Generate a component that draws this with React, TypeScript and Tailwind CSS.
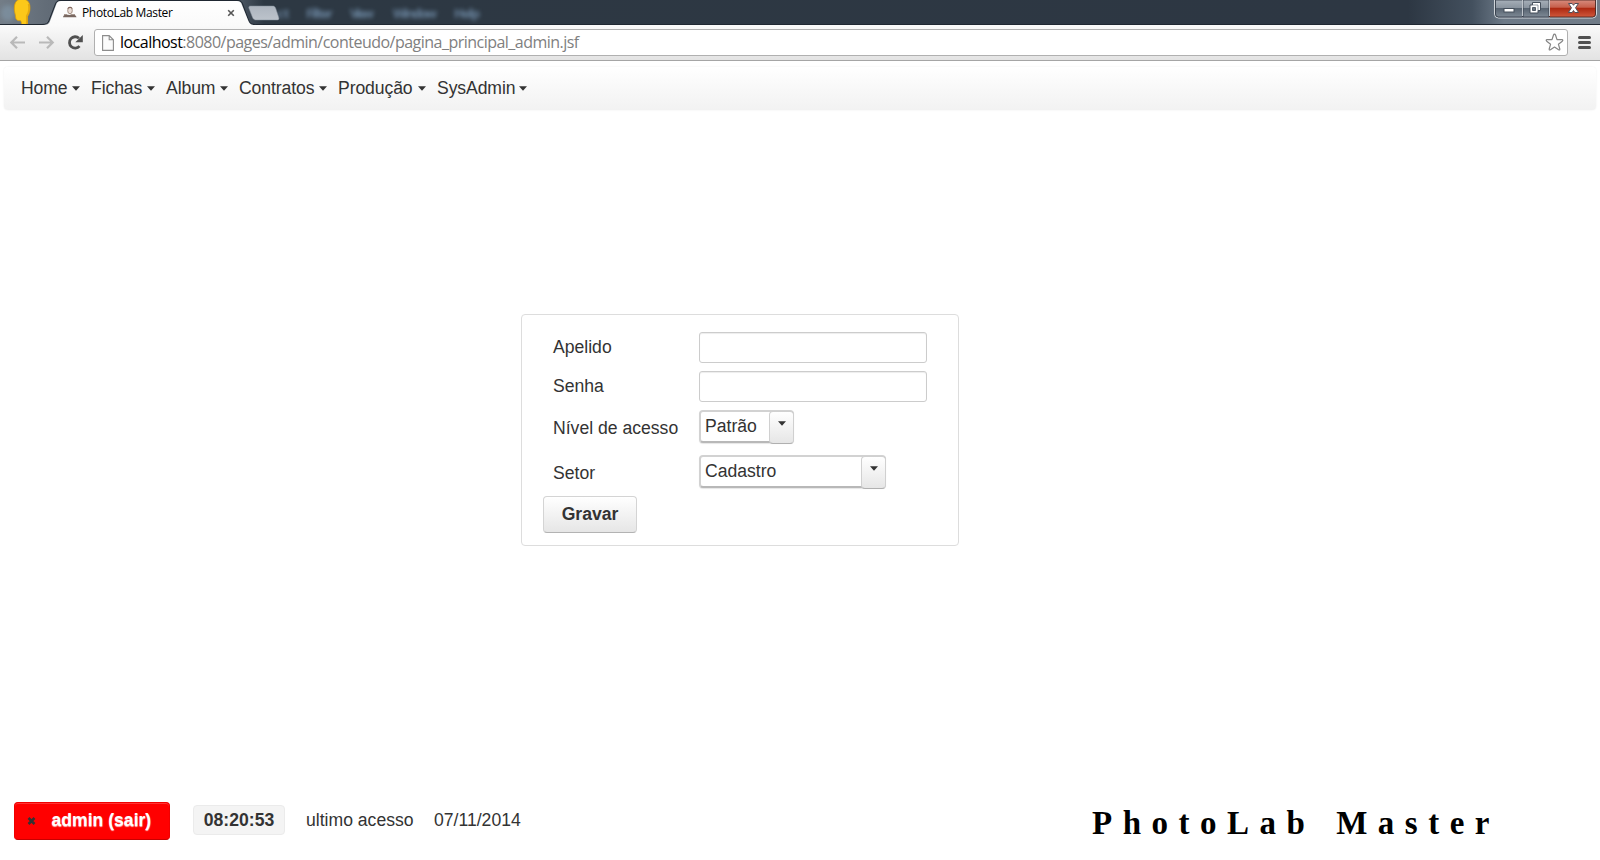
import React from "react";

const sans = "font-['Liberation_Sans',Arial,sans-serif]";

function Caret({ className = "" }: { className?: string }) {
  return (
    <svg className={className} width="8" height="5" viewBox="0 0 8 5">
      <path d="M0 0.300h8L4 4.700z" fill="#333" />
    </svg>
  );
}

function TitleBar() {
  return (
    <div className="relative flex h-[25px] shrink-0 overflow-hidden bg-[#2d3743]">
      <svg width="1600" height="25" viewBox="0 0 1600 25">
        <defs>
          <linearGradient id="frame" x1="0" x2="1">
            <stop offset="0" stopColor="#737d87" />
            <stop offset="0.03" stopColor="#626c77" />
            <stop offset="0.15" stopColor="#4b5662" />
            <stop offset="0.165" stopColor="#2d3843" />
            <stop offset="0.88" stopColor="#2d3743" />
            <stop offset="0.92" stopColor="#43505e" />
            <stop offset="0.94" stopColor="#6c7987" />
            <stop offset="1" stopColor="#717c88" />
          </linearGradient>
          <linearGradient id="tab" x2="0" y2="1">
            <stop offset="0" stopColor="#fff" />
            <stop offset="1" stopColor="#fafafa" />
          </linearGradient>
          <linearGradient id="btn" x2="0" y2="1">
            <stop offset="0" stopColor="#a7b0b9" />
            <stop offset="0.45" stopColor="#8a949f" />
            <stop offset="0.5" stopColor="#586471" />
            <stop offset="1" stopColor="#7e8995" />
          </linearGradient>
          <linearGradient id="close" x2="0" y2="1">
            <stop offset="0" stopColor="#d78c7e" />
            <stop offset="0.42" stopColor="#c7604c" />
            <stop offset="0.5" stopColor="#ae2a12" />
            <stop offset="1" stopColor="#d0583c" />
          </linearGradient>
          <linearGradient id="newtab" x2="0" y2="1">
            <stop offset="0" stopColor="#adb5bf" />
            <stop offset="1" stopColor="#bcc3cb" />
          </linearGradient>
          <filter id="soft" x="-20%" y="-50%" width="140%" height="200%">
            <feGaussianBlur stdDeviation="2" />
          </filter>
        </defs>
        <rect width="1600" height="25" fill="url(#frame)" />
        <ellipse cx="8" cy="13" rx="7" ry="8" fill="#8ba7bd" opacity="0.4" filter="url(#soft)" />
        <g filter="url(#soft)" fill="#7b9ab8" opacity="0.75" fontFamily="Open Sans" fontSize="13" fontWeight="700">
          <text x="277" y="18">ct</text>
          <text x="306" y="18" textLength="27">Filter</text>
          <text x="350" y="18" textLength="24">View</text>
          <text x="393" y="18" textLength="44">Window</text>
          <text x="454" y="18" textLength="26">Help</text>
        </g>
        <path d="M14.300 8C14.500 2 17-1 22-1c6 0 8 4 8 9 0 3.500-1 6.500-2.500 8.500V25H21.500c0-2-.2-3.500-1-4.300-3 .3-4.700-.7-4.900-3.700-.1-3-1.500-5-1.300-9z" fill="#fcc819" stroke="#d69b0d" strokeWidth="0.800" />
        <path d="M28.500 4c1 4 .5 8.500-1.800 12v9" stroke="#e4a911" strokeWidth="1.500" fill="none" />
        <path d="M0 24.500h42c4 0 6-1 7-4L55 5c1.200-3 2-4.500 5-4.500h178c3 0 4 1.500 5 4.500l5.500 15c1.500 3.500 3 4.500 7 4.500H1600" fill="none" stroke="#202832" />
        <path d="M43 25c4 0 6-1 7-4L56 5c1-3 2-4 5-4h176c3 0 4 1 5 4l6 15c1.500 4 3 5 7 5z" fill="url(#tab)" />
        <path d="M249 8.500c-.6-1.500 0-2.500 1.500-2.500h22c1.500 0 2.600.6 3.200 2.200l3 9c.6 1.900 0 2.800-1.500 2.800h-21c-2 0-3-.8-3.700-2.500z" fill="url(#newtab)" stroke="#7f8995" strokeWidth="0.500" />
        <g>
          <ellipse cx="70" cy="10.500" rx="2.300" ry="3.300" fill="#e9dcd5" stroke="#9a8478" strokeWidth="0.900" />
          <path d="M67.500 9c0-3 5-3 5 0-1-1.200-3-1.500-5 0z" fill="#80655a" />
          <path d="M63 17.300c.500-3 3-3.500 6.500-2.300 3.500-1 6.500-.5 7 2.300z" fill="#786760" />
          <path d="M64 14.500h3M71 14.500h4" stroke="#a8988f" />
        </g>
        <path d="M228.200 10.200l5.600 5.600M233.800 10.200l-5.600 5.600" stroke="#555" strokeWidth="1.600" />
        <path d="M1494.500 0v14q0 4 4 4h94q4 0 4-4V0" fill="none" stroke="#d0d5da" />
        <path d="M1495.500 0h27v17h-24q-3 0-3-3z" fill="url(#btn)" stroke="#303944" strokeWidth="0.800" />
        <path d="M1523 0h26v17h-26z" fill="url(#btn)" stroke="#303944" strokeWidth="0.800" />
        <path d="M1549.500 0h46v14q0 3-3 3h-43z" fill="url(#close)" stroke="#451f1a" strokeWidth="0.800" />
        <path d="M1522.500 0v16M1549.500 0v16" stroke="#c0c6cc" />
        <rect x="1504" y="8.500" width="10" height="3.500" fill="#fff" stroke="#454f5b" />
        <path d="M1532.500 2.500h8v8h-2.500v2.500h-8V5h2.500z" fill="#fff" stroke="#454f5b" />
        <path d="M1532.500 7.500h3v3h-3z" fill="#697580" stroke="#454f5b" strokeWidth="0.900" />
        <path d="M1532.500 5h5.500v5.500" fill="none" stroke="#65717d" strokeWidth="0.700" />
        <path d="M1568.500 3.500h3.700l1.300 1.800 1.300-1.800h3.700l-3 4.300 3.100 4.700h-3.800l-1.300-2-1.300 2h-3.800l3.100-4.700z" fill="#fff" stroke="#514e58" strokeWidth="1" />
      </svg>
      <span className="absolute left-[82px] top-[4px] whitespace-nowrap font-['Open_Sans',sans-serif] text-[12px] leading-[17px] tracking-[-0.35px] text-black">
        PhotoLab Master
      </span>
    </div>
  );
}

function Toolbar() {
  return (
    <div className="flex h-9 shrink-0 items-start border-b border-[#a5a5a5] bg-gradient-to-b from-[#fafafa] to-[#e3e3e3]">
      <svg className="shrink-0" width="94" height="35" viewBox="0 0 94 35">
        <g fill="none" stroke="#b9b9b9" strokeWidth="2.200">
          <path d="M25 17.500H11.500M17 11.800l-5.700 5.700 5.700 5.700" />
          <path d="M39 17.500h13.500M47 11.800l5.700 5.700-5.700 5.700" />
        </g>
        <path d="M79.500 21.200A5.700 5.700 0 1 1 79 13.200" fill="none" stroke="#505050" strokeWidth="2.800" />
        <path d="M82.800 10v7.300h-7.500z" fill="#505050" />
      </svg>
      <div className="mt-1 flex h-[27px] w-[1474px] items-center rounded-[3px] border border-[#b0b0b0] bg-white">
        <svg className="ml-[7px] shrink-0" width="12" height="16" viewBox="0 0 12 16">
          <path d="M.6.600h6.600l4.200 4.200v10.600H.6zM7.200.600v4.200h4.200" fill="#fbfbfb" stroke="#8c8c8c" strokeWidth="1.100" />
        </svg>
        <span className="mb-px ml-[6px] grow whitespace-nowrap font-['Open_Sans',sans-serif] text-[16px] leading-[24px] tracking-[-0.52px] text-[#808080]">
          <span className="text-black">localhost</span>:8080/pages/admin/conteudo/pagina_principal_admin.jsf
        </span>
        <svg className="mr-[3px] shrink-0" width="19" height="19" viewBox="0 0 19 19">
          <path d="M9.500 1.200Q10.200 1.200 10.500 2L12 6.600l4.900.1q1.600.3.400 1.500l-3.900 3 1.400 4.800q.1 1.500-1.200.8L9.500 14l-4.100 2.800q-1.300.7-1.200-.8l1.400-4.800-3.900-3Q.500 7 2.100 6.700L7 6.600 8.500 2q.3-.8 1-.8z" fill="#fff" stroke="#858585" strokeWidth="1.200" strokeLinejoin="round" />
        </svg>
      </div>
      <svg className="ml-[10px] shrink-0" width="14" height="35" viewBox="0 0 14 35">
        <path d="M1.500 12.500h10M1.500 17.500h10M1.500 22.500h10" stroke="#505050" strokeWidth="3" strokeLinecap="round" />
      </svg>
    </div>
  );
}

const menus = [
  { label: "Home", width: "w-[70px]" },
  { label: "Fichas", width: "w-[75px]" },
  { label: "Album", width: "w-[73px]" },
  { label: "Contratos", width: "w-[99px]" },
  { label: "Produção", width: "w-[99px]" },
  { label: "SysAdmin", width: "w-[101px]" },
];

function MenuBar() {
  return (
    <nav className="mx-1 mt-[6px] flex h-[43px] shrink-0 items-center rounded-[4px] bg-gradient-to-b from-white to-[#f2f2f2] pb-[2px] pl-[17px] shadow-[0_0_2px_rgba(0,0,0,0.08)]">
      {menus.map((m) => (
        <button key={m.label} className={`flex items-center justify-between pr-[11px] text-left leading-5 tracking-[-0.1px] ${m.width}`}>
          <span>{m.label}</span>
          <Caret className="mt-px shrink-0" />
        </button>
      ))}
    </nav>
  );
}

function TextField() {
  return (
    <input className="h-[31px] w-[228px] rounded-[3px] border border-[#ccc] bg-white px-1 shadow-[inset_0_1px_1px_rgba(0,0,0,0.075)] outline-none" />
  );
}

function Select({ value, width }: { value: string; width: string }) {
  return (
    <div className={`flex h-[33px] rounded-[4px] border-2 border-[#d2d2d2] border-b-[#b8b8b8] bg-white shadow-[0_1px_1px_rgba(0,0,0,0.1)] ${width}`}>
      <span className="ml-[4px] mt-[4px] grow leading-5">{value}</span>
      <span className="-mr-[2px] -mt-px flex h-[33px] w-[25px] shrink-0 justify-center rounded-[4px] border border-[#d0d0d0] border-b-[#b0b0b0] bg-gradient-to-b from-white to-[#e6e6e6] pt-[9px]">
        <Caret />
      </span>
    </div>
  );
}

function UserForm() {
  return (
    <form className="ml-[521px] mt-[204px] h-[232px] w-[438px] shrink-0 rounded-[4px] border border-[#ddd] pl-[21px] pt-[17px]">
      <div className="flex h-[39px] items-start">
        <label className="w-[156px] pl-[10px] pt-[5px] leading-5">Apelido</label>
        <TextField />
      </div>
      <div className="flex h-[39px] items-start">
        <label className="w-[156px] pl-[10px] pt-[5px] leading-5">Senha</label>
        <TextField />
      </div>
      <div className="flex h-[45px] items-start">
        <label className="w-[156px] pl-[10px] pt-[8px] leading-5">Nível de acesso</label>
        <Select value="Patrão" width="w-[95px]" />
      </div>
      <div className="flex h-[41px] items-start">
        <label className="w-[156px] pl-[10px] pt-[8px] leading-5">Setor</label>
        <Select value="Cadastro" width="w-[187px]" />
      </div>
      <button
        type="button"
        className="flex h-[37px] w-[94px] justify-center rounded-[4px] border border-[#d4d4d4] border-b-[#b3b3b3] bg-gradient-to-b from-white to-[#e6e6e6] pt-[7px] font-bold leading-5"
      >
        Gravar
      </button>
    </form>
  );
}

function Footer() {
  return (
    <footer className="flex h-[58px] shrink-0 items-start pl-[14px]">
      <button className="flex h-[38px] w-[156px] rounded-[4px] border border-[#f00000] border-b-[#c80000] bg-[#ff0000] pl-[12px] pt-[7px] shadow-[inset_0_1px_0_rgba(255,255,255,0.2)]">
        <svg className="mt-[7px] shrink-0" width="9" height="8" viewBox="0 0 9 8">
          <path d="M1.500 1l6 6M7.500 1l-6 6" stroke="#333" strokeWidth="2.500" />
        </svg>
        <span className="ml-[15.500px] whitespace-nowrap font-bold leading-5 text-white [text-shadow:0_1px_1px_rgba(255,255,255,0.75)]">
          admin (sair)
        </span>
      </button>
      <span className="ml-[23px] mt-[3px] flex h-[30px] w-[92px] justify-center rounded-[4px] border border-[#ebebeb] bg-[#f4f4f4] pt-[4px] font-bold leading-5">
        08:20:53
      </span>
      <span className="ml-[21px] mt-[8px] w-[128px] whitespace-nowrap leading-5">ultimo acesso</span>
      <span className="mt-[8px] whitespace-nowrap leading-5">07/11/2014</span>
      <span className="ml-auto mr-[100px] mt-[1px] whitespace-nowrap font-['Liberation_Serif',serif] text-[33px] font-bold leading-[40px] tracking-[10.5px] text-black [word-spacing:2px]">
        PhotoLab Master
      </span>
    </footer>
  );
}

export default function App() {
  return (
    <div className={`flex h-[860px] w-[1600px] flex-col overflow-hidden bg-white text-[17.6px] text-[#333] ${sans}`}>
      <TitleBar />
      <Toolbar />
      <MenuBar />
      <UserForm />
      <div className="grow" />
      <Footer />
    </div>
  );
}
